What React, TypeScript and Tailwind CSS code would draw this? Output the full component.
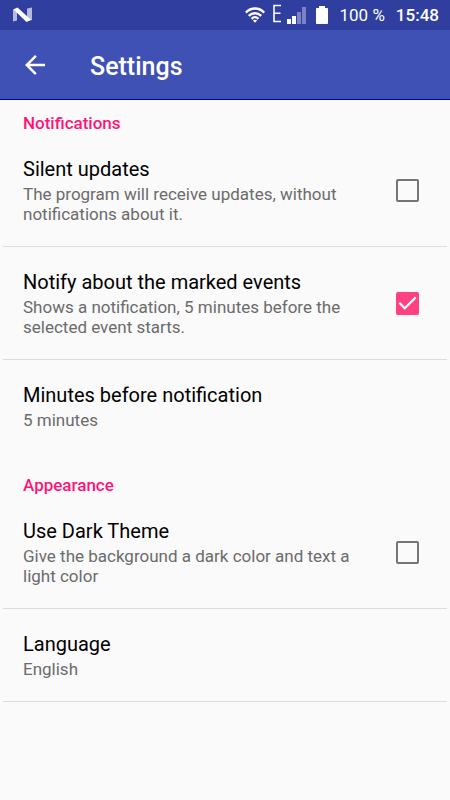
import { useState, type ReactNode } from "react";

function StatusBar() {
  return (
    <div className="flex h-[30px] items-center justify-between bg-[#303f9f] pr-[11px] pl-[13px] text-white">
      <svg className="h-4 w-[19px]" viewBox="0 0 19 16" aria-hidden="true">
        <path d="M0 2.500 4 1v12.500L0 14.500z" fill="#b4bade" />
        <path d="M14 1.500 19 .5v12.500L14 14.500z" fill="#b4bade" />
        <path d="M.5 2.500 4.500.5 18 12.800 13.500 15z" fill="#fff" />
      </svg>
      <div className="flex items-center">
        <svg className="h-4 w-5" viewBox="0 0 20 16" fill="none" stroke="#fff" strokeWidth="2.4" aria-hidden="true">
          <path d="M.8 5.600C6 .2 14 .2 19.200 5.600" />
          <path d="M3.800 8.800c3.600-3.500 8.800-3.500 12.400 0" />
          <path d="M6.600 11.800c2-2 4.800-2 6.800 0" />
          <path d="M10 15.800 7.900 13.600c1.200-1 3-1 4.200 0z" fill="#fff" stroke="none" />
        </svg>
        <svg className="ml-2 h-[22px] w-2" viewBox="0 0 8 22" fill="none" stroke="#fff" strokeWidth="1.600" aria-label="Edge network">
          <path d="M8 1.500H1v16h7M1 9.200h6.500" />
        </svg>
        <svg className="ml-[6px] h-[18px] w-5" viewBox="0 0 20 18" aria-hidden="true">
          <path d="M0 13h4v5H0zM5 10h4v8H5z" fill="#fff" />
          <path d="M10 6h4v12h-4zM15 1h4v17h-4z" fill="#7a84c2" />
        </svg>
        <svg className="ml-[9px] h-[18px] w-3" viewBox="0 0 12 18" aria-hidden="true">
          <path d="M3 0h6v2h2.200q.8 0 .8.8v14.400q0 .8-.8.8H.8q-.8 0-.8-.8V2.800q0-.8.8-.8H3z" fill="#fff" />
        </svg>
        <span className="ml-3 text-[17px] leading-6">100 %</span>
        <span className="ml-[11px] text-[17px] leading-6 font-medium">15:48</span>
      </div>
    </div>
  );
}

function AppBar() {
  return (
    <header className="flex h-[70px] items-center border-b border-[#00009c] bg-[#3f51b5] text-white">
      <button type="button" aria-label="Back" className="ml-[25px] flex">
        <svg className="h-5 w-5" viewBox="0 0 20 20" fill="#fff" aria-hidden="true">
          <path d="M20 8.750H4.787l6.988-6.988L10 0 0 10l10 10 1.763-1.763-6.976-6.987H20z" />
        </svg>
      </button>
      <h1 className="ml-[45px] pt-1 text-[25px] leading-8 font-medium">Settings</h1>
    </header>
  );
}

function ItemText({ title, summary }: { title: string; summary: string }) {
  return (
    <span className="block text-left">
      <span className="block text-[20px] leading-6 text-black">{title}</span>
      <span className="mt-[3px] block text-[17px] leading-5 text-[#6b6b6b]">{summary}</span>
    </span>
  );
}

type CheckItemProps = { id: string; title: string; summary: string; initial?: boolean };

function CheckItem({ id, title, summary, initial = false }: CheckItemProps) {
  const [checked, setChecked] = useState(initial);
  return (
    <label htmlFor={id} className="flex items-center justify-between pt-[23px] pr-7 pb-[22px] pl-5">
      <ItemText title={title} summary={summary} />
      <span className="ml-8 grid shrink-0">
        <input
          id={id}
          type="checkbox"
          checked={checked}
          onChange={(e) => setChecked(e.target.checked)}
          className="col-start-1 row-start-1 h-[23px] w-[23px] appearance-none rounded-[2px] border-2 border-[#757575] checked:border-[#ff4081] checked:bg-[#ff4081]"
        />
        {checked && (
          <svg className="pointer-events-none col-start-1 row-start-1 h-[23px] w-[23px]" viewBox="0 0 23 23" fill="none" stroke="#fff" strokeWidth="2.2" aria-hidden="true">
            <path d="m3.300 10.800 5.500 5.500L19.700 5.400" />
          </svg>
        )}
      </span>
    </label>
  );
}

function LinkItem({ title, summary }: { title: string; summary: string }) {
  return (
    <button type="button" className="block w-full px-5 pt-[23px] pb-[22px]">
      <ItemText title={title} summary={summary} />
    </button>
  );
}

function Section({ title, children }: { title: string; children: ReactNode }) {
  return (
    <section className="px-[3px]">
      <h2 className="pl-5 text-[17px] leading-[22px] font-medium text-[#ff1478]">{title}</h2>
      <div className="divide-y divide-[#dcdcdc]">{children}</div>
    </section>
  );
}

export default function App() {
  return (
    <div className="min-h-screen bg-[#fafafa] font-[Roboto,sans-serif]">
      <StatusBar />
      <AppBar />
      <main className="flex flex-col gap-[22px] pt-3">
        <Section title="Notifications">
          <CheckItem
            id="silent"
            title="Silent updates"
            summary="The program will receive updates, without notifications about it."
          />
          <CheckItem
            id="notify"
            title="Notify about the marked events"
            summary="Shows a notification, 5 minutes before the selected event starts."
            initial
          />
          <LinkItem title="Minutes before notification" summary="5 minutes" />
        </Section>
        <Section title="Appearance">
          <CheckItem
            id="dark"
            title="Use Dark Theme"
            summary="Give the background a dark color and text a light color"
          />
          <LinkItem title="Language" summary="English" />
          <div />
        </Section>
      </main>
    </div>
  );
}
